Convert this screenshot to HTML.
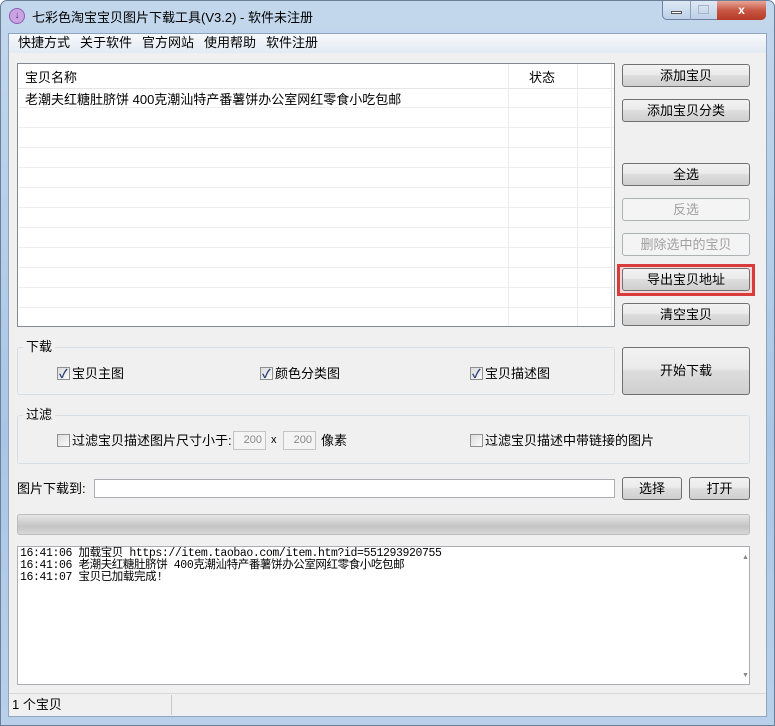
<!DOCTYPE html>
<html><head><meta charset="utf-8"><style>
*{box-sizing:border-box;margin:0;padding:0}
body{width:775px;height:726px;overflow:hidden;background:#fff;font-family:"Liberation Sans","Noto Sans CJK SC",sans-serif;font-size:12px;color:#000;position:relative}
.a{position:absolute}
.frame{left:0;top:0;width:775px;height:726px;background:linear-gradient(#c3d7ec,#a9c6e6 60%,#b9d0ea);border:1px solid #6b7f99;border-radius:7px 7px 0 0}
.client{left:8px;top:33px;width:759px;height:684px;background:#f0f0f0;border:1px solid #8ea4bf}
.btn{position:absolute;border:1px solid #707070;border-radius:3px;background:linear-gradient(#f2f2f2,#ebebeb 45%,#dddddd 50%,#cfcfcf);text-align:center;font-size:13px}
.dis{border-color:#adb2b5;background:#f4f4f4;color:#a0a0a0}
.cb{position:absolute;width:13px;height:13px;border:1px solid #8f8f8f;background:linear-gradient(135deg,#dcdcdc,#fbfbfb)}
.cb.on::after{content:"✓";position:absolute;left:1px;top:-3px;font-size:12px;color:#2a3f75;font-weight:bold}
.t{position:absolute;font-size:13px;white-space:nowrap;line-height:15px}
.grp{position:absolute;border:1px solid #d5dfe5;border-radius:3px}
</style></head><body>
<div class="a frame"></div>
<div class="a" style="left:9px;top:8px;width:16px;height:16px;border-radius:50%;background:#c9a4e0;border:1px solid #8d5fb5;color:#5a2e86;font-size:10px;text-align:center;line-height:14px">↓</div>
<div class="t" style="left:32px;top:10px;font-size:13px">七彩色淘宝宝贝图片下载工具(V3.2) - 软件未注册</div>
<div class="a" style="left:662px;top:1px;width:104px;height:19px;border:1px solid #6f80a0;border-top:none;border-radius:0 0 5px 5px;background:linear-gradient(#dfe9f5,#bcd0e8)"></div>
<div class="a" style="left:717px;top:1px;width:49px;height:19px;border-radius:0 0 5px 0;background:linear-gradient(#e8a597,#c75643 50%,#b63a26);color:#fff;text-align:center;font-weight:bold;font-size:12px;line-height:18px">x</div>
<div class="a" style="left:690px;top:1px;width:1px;height:19px;background:#8fa0b9"></div>
<div class="a" style="left:671px;top:11px;width:11px;height:3px;background:#fff;border:1px solid #555"></div>
<div class="a" style="left:698px;top:5px;width:11px;height:9px;border:1px solid #aab4c4"></div>
<div class="a client"></div>
<div class="a" style="left:9px;top:34px;width:757px;height:19px;background:linear-gradient(#f7f9fc,#e3eaf3)"></div>
<div class="t" style="left:18px;top:35px">快捷方式</div>
<div class="t" style="left:80px;top:35px">关于软件</div>
<div class="t" style="left:142px;top:35px">官方网站</div>
<div class="t" style="left:204px;top:35px">使用帮助</div>
<div class="t" style="left:266px;top:35px">软件注册</div>
<!-- list -->
<div class="a" style="left:17px;top:63px;width:598px;height:264px;background:#fff;border:1px solid #828790;overflow:hidden;background-image:repeating-linear-gradient(#fff 0 19px,#eeeeee 19px 20px);background-position:0 24px">
<div class="a" style="left:0;top:0;width:598px;height:25px;background:#fff;border-bottom:1px solid #e5e5e5"></div>
<div class="a" style="left:490px;top:0;width:1px;height:264px;background:#ececec"></div>
<div class="a" style="left:559px;top:0;width:1px;height:264px;background:#ececec"></div>
<div class="a" style="left:593px;top:0;width:1px;height:264px;background:#ececec"></div>
<div class="t" style="left:7px;top:6px">宝贝名称</div>
<div class="t" style="left:511px;top:6px">状态</div>
<div class="t" style="left:7px;top:28px">老潮夫红糖肚脐饼 400克潮汕特产番薯饼办公室网红零食小吃包邮</div>
</div>
<div class="btn" style="left:622px;top:64px;width:128px;height:23px;line-height:21px">添加宝贝</div>
<div class="btn" style="left:622px;top:99px;width:128px;height:23px;line-height:21px">添加宝贝分类</div>
<div class="btn" style="left:622px;top:163px;width:128px;height:23px;line-height:21px">全选</div>
<div class="btn dis" style="left:622px;top:198px;width:128px;height:23px;line-height:21px">反选</div>
<div class="btn dis" style="left:622px;top:233px;width:128px;height:23px;line-height:21px">删除选中的宝贝</div>
<div class="a" style="left:617px;top:264px;width:138px;height:32px;border:3px solid #d83b3b;background:#f6d6d6"></div>
<div class="btn" style="left:622px;top:268px;width:128px;height:23px;line-height:21px">导出宝贝地址</div>
<div class="btn" style="left:622px;top:303px;width:128px;height:23px;line-height:21px">清空宝贝</div>
<div class="grp" style="left:17px;top:347px;width:598px;height:48px"></div>
<div class="t" style="left:23px;top:339px;background:#f0f0f0;padding:0 3px">下载</div>
<div class="cb on" style="left:57px;top:367px"></div><div class="t" style="left:72px;top:366px">宝贝主图</div>
<div class="cb on" style="left:260px;top:367px"></div><div class="t" style="left:275px;top:366px">颜色分类图</div>
<div class="cb on" style="left:470px;top:367px"></div><div class="t" style="left:485px;top:366px">宝贝描述图</div>
<div class="btn" style="left:622px;top:347px;width:128px;height:48px;line-height:46px">开始下载</div>
<div class="grp" style="left:17px;top:415px;width:733px;height:49px"></div>
<div class="t" style="left:23px;top:407px;background:#f0f0f0;padding:0 3px">过滤</div>
<div class="cb" style="left:57px;top:434px"></div><div class="t" style="left:72px;top:433px">过滤宝贝描述图片尺寸小于:</div>
<div class="a" style="left:233px;top:431px;width:33px;height:19px;border:1px solid #c4c4c4;background:#f4f4f4;color:#888;font-size:11px;text-align:right;padding:2px 3px;line-height:13px">200</div>
<div class="t" style="left:271px;top:433px;font-size:11px">x</div>
<div class="a" style="left:283px;top:431px;width:33px;height:19px;border:1px solid #c4c4c4;background:#f4f4f4;color:#888;font-size:11px;text-align:right;padding:2px 3px;line-height:13px">200</div>
<div class="t" style="left:321px;top:433px">像素</div>
<div class="cb" style="left:470px;top:434px"></div><div class="t" style="left:485px;top:433px">过滤宝贝描述中带链接的图片</div>
<div class="t" style="left:17px;top:481px">图片下载到:</div>
<div class="a" style="left:94px;top:479px;width:521px;height:19px;background:#fff;border:1px solid #abadb3"></div>
<div class="btn" style="left:622px;top:477px;width:60px;height:23px;line-height:21px">选择</div>
<div class="btn" style="left:689px;top:477px;width:61px;height:23px;line-height:21px">打开</div>
<div class="a" style="left:17px;top:514px;width:733px;height:21px;border:1px solid #bcbcbc;border-radius:3px;background:linear-gradient(#e6e6e6,#cfcfcf 40%,#c4c4c4 60%,#d8d8d8)"></div>
<div class="a" style="left:17px;top:546px;width:733px;height:139px;background:#fff;border:1px solid #abadb3"></div>
<div class="a" style="left:732px;top:547px;width:17px;height:137px;background:#fff"></div>
<div class="t" style="left:742px;top:550px;font-size:7px;color:#888">▲</div>
<div class="t" style="left:742px;top:668px;font-size:7px;color:#888">▼</div>
<div class="a" style="left:20px;top:548px;font-family:'Liberation Mono','Noto Sans CJK SC',monospace;font-size:11.5px;line-height:12px;white-space:pre;letter-spacing:-0.4px">16:41:06 加载宝贝 https://item.taobao.com/item.htm?id=551293920755
16:41:06 老潮夫红糖肚脐饼 400克潮汕特产番薯饼办公室网红零食小吃包邮
16:41:07 宝贝已加载完成!</div>
<div class="a" style="left:9px;top:693px;width:757px;height:23px;border-top:1px solid #d8d8d8;background:#f0f0f0"></div>
<div class="a" style="left:171px;top:695px;width:1px;height:20px;background:#c8c8c8"></div>
<div class="t" style="left:12px;top:697px">1 个宝贝</div>
</body></html>
